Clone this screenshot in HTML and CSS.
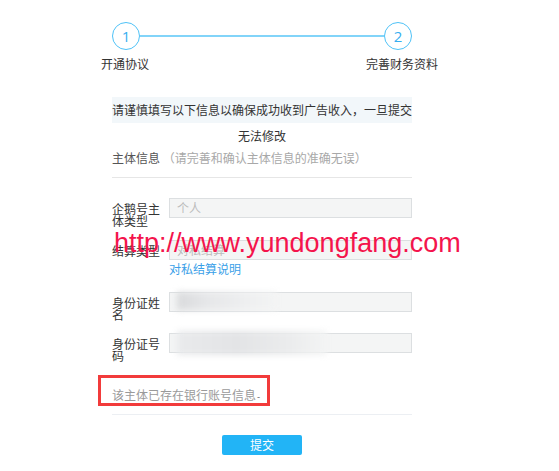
FILE: index.html
```html
<!DOCTYPE html>
<html lang="zh-CN">
<head>
<meta charset="utf-8">
<title>完善财务资料</title>
<link rel="stylesheet" href="styles.css">
</head>
<body>
<div class="page">
  <div class="steps">
    <div class="track">
      <span class="circle">1</span>
      <span class="line"></span>
      <span class="circle">2</span>
    </div>
    <div class="step-labels">
      <span>开通协议</span>
      <span>完善财务资料</span>
    </div>
  </div>

  <div class="notice">请谨慎填写以下信息以确保成功收到广告收入，一旦提交无法修改</div>

  <div class="section-title">主体信息 <span class="hint">（请完善和确认主体信息的准确无误）</span></div>

  <div class="form">
    <div class="row row-1">
      <div class="label">企鹅号主体类型</div>
      <div class="field">个人</div>
    </div>
    <div class="row row-2">
      <div class="label">结算类型</div>
      <div class="field-col">
        <div class="field">对私结算</div>
        <a class="link" href="#">对私结算说明</a>
      </div>
    </div>
    <div class="row row-3">
      <div class="label">身份证姓名</div>
      <div class="field"><span class="blur blur-name"></span></div>
    </div>
    <div class="row row-4">
      <div class="label">身份证号码</div>
      <div class="field"><span class="blur blur-id"></span></div>
    </div>
  </div>

  <div class="bank-info">该主体已存在银行账号信息<span class="caret">-</span></div>

  <div class="actions"><button class="submit" type="button">提交</button></div>
</div>

<div class="watermark">http://www.yundongfang.com</div>
<div class="annotation"></div>
</body>
</html>
```

FILE: styles.css
```css
html, body {
  margin: 0;
  padding: 0;
  background: #ffffff;
}

body {
  font-family: "Noto Sans CJK SC", "Noto Sans", sans-serif;
  font-size: 12px;
  color: #333333;
}

.page {
  width: 300px;
  margin-left: 112px;
  padding-top: 22px;
}

/* steps */
.track {
  display: flex;
  align-items: center;
  height: 28px;
}

.circle {
  box-sizing: border-box;
  width: 28px;
  height: 28px;
  border: 1.5px solid #4ec2f7;
  border-radius: 50%;
  display: flex;
  align-items: center;
  justify-content: center;
  font-family: "Open Sans", "Liberation Sans", sans-serif;
  font-size: 15px;
  color: #36aef0;
  line-height: 1;
}

.line {
  flex: 1;
  height: 2px;
  background: #82d4f9;
}

.step-labels {
  display: flex;
  justify-content: space-between;
  margin: 7px -26px 0 -11px;
  line-height: 14px;
  color: #333333;
}

/* notice */
.notice {
  margin-top: 26px;
  height: 26px;
  line-height: 26px;
  background: #f2f7fa;
  text-align: center;
  color: #333333;
}

.section-title {
  margin-top: 25px;
  line-height: 20px;
  padding-bottom: 9px;
  border-bottom: 1px solid #e6e6e6;
  color: #555555;
}

.hint {
  color: #a8a8a8;
}

/* form */
.form {
  padding-top: 20px;
}

.row {
  display: flex;
  align-items: flex-start;
  gap: 9px;
}

.row-2 { margin-top: 13px; }
.row-3 { margin-top: 16px; }
.row-4 { margin-top: 12px; }

.label {
  width: 48px;
  padding-top: 5px;
  line-height: 12px;
  color: #333333;
}

.field-col {
  display: flex;
  flex-direction: column;
}

.field {
  box-sizing: border-box;
  width: 243px;
  height: 20px;
  border: 1px solid #dcdfe1;
  background: #f4f5f5;
  padding-left: 7px;
  line-height: 18px;
  color: #bcbcbc;
  overflow: visible;
}

.link {
  margin-top: 2px;
  line-height: 14px;
  color: #3a9fe8;
  text-decoration: none;
}

.blur {
  display: block;
  height: 18px;
  margin-top: -1px;
  filter: blur(3px);
}

.blur-name {
  width: 100px;
  background: linear-gradient(90deg, #d9dadc 0%, #e6e7e9 30%, #eeeff0 70%, #f3f4f4 100%);
}

.blur-id {
  width: 150px;
  height: 24px;
  margin-top: -3px;
  background: linear-gradient(90deg, #e9eaec 0%, #e3e4e6 40%, #ebeced 75%, #f3f4f4 100%);
}

/* bank info */
.bank-info {
  margin-top: 23px;
  line-height: 20px;
  padding-bottom: 7px;
  border-bottom: 1px solid #eceff3;
  color: #9a9a9a;
}

.caret {
  font-size: 9px;
  color: #555555;
  margin-left: 1px;
}

.actions {
  margin-top: 20px;
  text-align: center;
}

.submit {
  width: 80px;
  height: 20px;
  padding: 0;
  border: none;
  border-radius: 2px;
  background: #22b4f6;
  color: #ffffff;
  font-family: "Noto Sans CJK SC", sans-serif;
  font-size: 12px;
  line-height: 20px;
  cursor: pointer;
}

/* overlays */
.watermark {
  position: absolute;
  left: 114px;
  top: 230px;
  font-family: "Liberation Sans", Arial, sans-serif;
  font-size: 27px;
  line-height: 27px;
  color: #f4144c;
  white-space: nowrap;
}

.annotation {
  position: absolute;
  left: 98px;
  top: 375px;
  width: 172px;
  height: 31px;
  box-sizing: border-box;
  border: 3px solid #f23b3b;
}
```
